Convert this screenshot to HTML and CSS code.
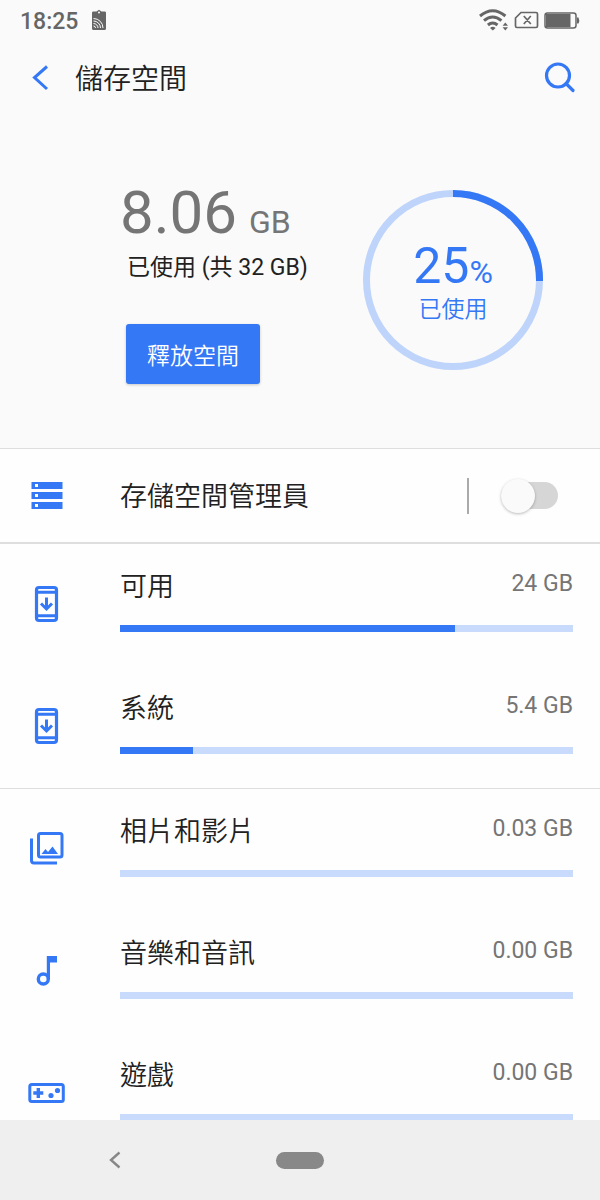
FILE: index.html
```html
<!DOCTYPE html>
<html lang="zh-Hant">
<head>
<meta charset="utf-8">
<meta name="viewport" content="width=device-width, initial-scale=1">
<title>儲存空間</title>
<link rel="stylesheet" href="styles.css">
</head>
<body>
<div class="app">
  <div class="status-bar">
    <span class="clock">18:25</span>
    <svg class="cast" width="16" height="22" viewBox="0 0 16 22" aria-hidden="true">
      <path d="M5.500 2.500 8 .8l2.500 1.700h3.200q1.300 0 1.300 1.300v15.700q0 1.500-1.500 1.500h-11Q1 21 1 19.500V3.800q0-1.300 1.300-1.300z" fill="#666"/>
      <circle cx="8" cy="3.500" r="1" fill="#fafafa"/>
      <g fill="none" stroke="#fafafa"><path d="M2.500 9.500a9.500 9.500 0 0 1 9.500 9.500M2.500 12a7 7 0 0 1 7 7M2.500 14.500A4.500 4.500 0 0 1 7 19M2.500 17a2 2 0 0 1 2 2"/></g>
    </svg>
    <svg class="wifi" width="30" height="24" viewBox="0 0 30 24" aria-hidden="true">
      <g fill="none" stroke="#666" stroke-width="3"><path d="M1 8q12.700-10.500 25.400 0"/><path d="M5 12.700q8.700-7.400 17.400 0"/><path d="M8.900 17q4.800-4 9.600 0"/></g>
      <path d="M11 20q2.800-2.500 5.600 0L13.800 22.500zM26.300 14.500l2.700 3.200h-5.400zM26.300 22.500l2.700-3.200h-5.400z" fill="#666"/>
    </svg>
    <svg class="sim" width="25" height="18" viewBox="0 0 25 18" aria-hidden="true">
      <path d="M7 1.500h15q1.500 0 1.500 1.500v12q0 1.500-1.500 1.500H3Q1.500 16.500 1.500 15V7zM9.800 5l7 8M16.800 5l-7 8" fill="none" stroke="#666" stroke-width="1.700"/>
    </svg>
    <svg class="battery" width="36" height="17" viewBox="0 0 36 17" aria-hidden="true">
      <rect x="1" y="1" width="31" height="15" rx="2.500" fill="none" stroke="#666" stroke-width="1.500"/>
      <path d="M2 2h24.500v13H2zM33 5.500h1.500q1.500 3 0 6H33z" fill="#666"/>
    </svg>
  </div>

  <header class="app-bar">
    <button class="icon-button" type="button" aria-label="返回">
      <svg width="18" height="26" viewBox="0 0 18 26"><path d="M16 1.500 3.500 12.500 16 24" fill="none" stroke="#3478f6" stroke-width="3"/></svg>
    </button>
    <h1 class="title">儲存空間</h1>
    <button class="icon-button" type="button" aria-label="搜尋">
      <svg width="32" height="32" viewBox="0 0 32 32"><g fill="none" stroke="#3478f6" stroke-width="3.200"><circle cx="14" cy="13.500" r="11.500"/><path d="m22 21.500 7 7" stroke-linecap="round"/></g></svg>
    </button>
  </header>

  <main class="content">
    <section class="summary">
      <div class="usage">
        <p class="amount">8.06 <span class="unit">GB</span></p>
        <p class="total">已使用 (共 32 GB)</p>
        <button class="free-button" type="button">釋放空間</button>
      </div>
      <div class="ring">
        <svg class="ring-chart" width="180" height="180" viewBox="0 0 180 180" aria-hidden="true">
          <circle cx="90" cy="90" r="86.500" fill="none" stroke="#bed4fb" stroke-width="7"/>
          <path d="M90 3.500A86.500 86.500 0 0 1 176.500 91" fill="none" stroke="#3478f6" stroke-width="7"/>
        </svg>
        <div class="ring-text">
          <p class="percent">25<span class="sign">%</span></p>
          <p class="ring-label">已使用</p>
        </div>
      </div>
    </section>

    <section class="manager">
      <svg class="row-icon" width="44" height="44" viewBox="0 0 44 44" aria-hidden="true">
        <path fill-rule="evenodd" fill="#3478f6" d="M6.500 8h31v7h-31zm3.500 2v3h3v-3zM6.500 18h31v7h-31zm3.500 2v3h3v-3zM6.500 28h31v7h-31zm3.500 2v3h3v-3z"/>
      </svg>
      <label class="name" for="manager">存儲空間管理員</label>
      <span class="separator"></span>
      <input class="switch" id="manager" type="checkbox" role="switch">
    </section>

    <section class="group">
      <div class="row">
        <svg class="row-icon" width="44" height="44" viewBox="0 0 44 44" aria-hidden="true">
          <rect x="11.500" y="5.500" width="20" height="33" rx="2.500" fill="none" stroke="#3478f6" stroke-width="3.200"/>
          <path d="M12 10.300h19M12 33.700h19" stroke="#3478f6" stroke-width="3"/>
          <path d="M21.500 15.500v11M16 21.500l5.500 5.500 5.500-5.500" fill="none" stroke="#3478f6" stroke-width="3"/>
        </svg>
        <label class="name" for="available">可用</label><span class="size">24 GB</span>
        <progress class="meter" id="available" max="100" value="74"></progress>
      </div>
      <div class="row">
        <svg class="row-icon" width="44" height="44" viewBox="0 0 44 44" aria-hidden="true">
          <rect x="11.500" y="5.500" width="20" height="33" rx="2.500" fill="none" stroke="#3478f6" stroke-width="3.200"/>
          <path d="M12 10.300h19M12 33.700h19" stroke="#3478f6" stroke-width="3"/>
          <path d="M21.500 15.500v11M16 21.500l5.500 5.500 5.500-5.500" fill="none" stroke="#3478f6" stroke-width="3"/>
        </svg>
        <label class="name" for="system">系統</label><span class="size">5.4 GB</span>
        <progress class="meter" id="system" max="100" value="16.200"></progress>
      </div>
    </section>

    <section class="group">
      <div class="row">
        <svg class="row-icon" width="44" height="44" viewBox="0 0 44 44" aria-hidden="true">
          <g fill="none" stroke="#3478f6" stroke-width="3"><rect x="13.500" y="6.500" width="23.500" height="23.500" rx="2"/><path d="M6.500 11.500v22q0 2.500 2.500 2.500h23"/></g>
          <path d="M16.500 27 20.500 22l2.500 3 4.500-5.500 5.500 7.500z" fill="#3478f6"/>
        </svg>
        <label class="name" for="photos">相片和影片</label><span class="size">0.03 GB</span>
        <progress class="meter" id="photos" max="100" value="0"></progress>
      </div>
      <div class="row">
        <svg class="row-icon" width="44" height="44" viewBox="0 0 44 44" aria-hidden="true">
          <circle cx="18.300" cy="30" r="5" fill="none" stroke="#3478f6" stroke-width="3.400"/>
          <path d="M21.800 7h10.200v6.500h-7V30h-3.200z" fill="#3478f6"/>
        </svg>
        <label class="name" for="music">音樂和音訊</label><span class="size">0.00 GB</span>
        <progress class="meter" id="music" max="100" value="0"></progress>
      </div>
      <div class="row">
        <svg class="row-icon" width="44" height="44" viewBox="0 0 44 44" aria-hidden="true">
          <rect x="4.800" y="13.500" width="33.500" height="17" rx="2" fill="none" stroke="#3478f6" stroke-width="3"/>
          <path d="M13.300 17v10M8.300 22h10" stroke="#3478f6" stroke-width="3.400"/>
          <circle cx="26" cy="24.500" r="2.600" fill="#3478f6"/><circle cx="32.500" cy="19.500" r="2.600" fill="#3478f6"/>
        </svg>
        <label class="name" for="games">遊戲</label><span class="size">0.00 GB</span>
        <progress class="meter" id="games" max="100" value="0"></progress>
      </div>
    </section>
  </main>

  <nav class="nav-bar">
    <button class="icon-button" type="button" aria-label="上一頁">
      <svg width="14" height="18" viewBox="0 0 14 18"><path d="m11.500 1.500-8.500 7.500 8.500 7.500" fill="none" stroke="#888" stroke-width="2.400"/></svg>
    </button>
    <button class="home" type="button" aria-label="主畫面"></button>
    <span></span>
  </nav>
</div>
</body>
</html>
```
FILE: styles.css
```css
* {
  box-sizing: border-box;
}

body {
  margin: 0;
  background: #fafafa;
  color: #212121;
  font-family: Roboto, "Noto Sans CJK TC", sans-serif;
}

h1,
p {
  margin: 0;
  font-weight: 400;
}

button {
  margin: 0;
  padding: 0;
  border: 0;
  background: none;
  font: inherit;
}

svg {
  display: block;
  flex: none;
}

.app {
  display: flex;
  flex-direction: column;
  height: 100vh;
}

.status-bar {
  display: flex;
  align-items: center;
  flex: none;
  height: 40px;
  padding: 0 20px;
  color: #666;
}

.clock {
  padding-top: 3px;
  font-size: 23px;
  font-weight: 500;
  line-height: 40px;
}

.cast {
  margin-left: 13px;
}

.wifi {
  margin-left: auto;
}

.sim {
  margin: 0 5px;
}

.app-bar {
  display: flex;
  align-items: center;
  flex: none;
  height: 76px;
  padding: 0 24px 0 31px;
}

.icon-button {
  display: flex;
  align-items: center;
  justify-content: center;
}

.title {
  flex: 1;
  margin-left: 26px;
  padding-top: 4px;
  font-size: 28px;
  font-weight: 350;
  line-height: 40px;
}

.content {
  flex: 1;
  min-height: 0;
  overflow-y: auto;
  scrollbar-width: none;
}

.summary {
  display: flex;
  justify-content: space-between;
  height: 333px;
  padding: 59px 57px 0 120px;
  border-bottom: 1px solid #dedede;
}

.amount {
  display: flex;
  align-items: baseline;
  gap: 12px;
  color: #757575;
  font-size: 60px;
  line-height: 76px;
}

.unit {
  font-size: 32px;
  line-height: 1;
}

.total {
  margin-left: 7px;
  font-size: 23px;
  line-height: 34px;
}

.free-button {
  height: 60px;
  margin: 39px 0 0 6px;
  padding: 0 21px;
  border-radius: 3px;
  background: #3478f6;
  box-shadow: 0 1px 3px #0003;
  color: #fff;
  font-size: 23px;
  font-weight: 350;
}

.ring {
  display: grid;
  height: 180px;
  margin-top: 15px;
  place-items: center;
}

.ring-chart,
.ring-text {
  grid-area: 1 / 1;
}

.ring-text {
  padding-top: 8px;
  color: #3478f6;
  text-align: center;
}

.percent {
  font-size: 50px;
  line-height: 52px;
}

.sign {
  font-size: 32px;
  line-height: 1;
}

.ring-label {
  font-size: 23px;
  font-weight: 350;
  line-height: 36px;
}

.manager {
  display: flex;
  align-items: center;
  height: 95px;
  padding: 0 42px 0 25px;
  border-bottom: 2px solid #dedede;
  background: #fefefe;
}

.manager .name {
  flex: 1;
  margin-left: 51px;
}

.name {
  padding-top: 3px;
  font-size: 27px;
  font-weight: 350;
  line-height: 36px;
}

.separator {
  width: 2px;
  height: 36px;
  margin-right: 32px;
  background: #aaa;
}

.switch {
  display: flex;
  align-items: center;
  appearance: none;
  width: 57px;
  height: 27px;
  margin: 0;
  border-radius: 14px;
  background: #d6d6d6;
}

.switch::before {
  width: 34px;
  height: 34px;
  flex: none;
  border-radius: 50%;
  background: #fafafa;
  box-shadow: 0 1px 3px #0004;
  content: "";
}

.switch:checked {
  justify-content: flex-end;
  background: #bed4fb;
}

.group {
  border-bottom: 1px solid #dedede;
  background: #fefefe;
}

.row {
  display: grid;
  grid-template-columns: 44px 1fr auto;
  grid-template-rows: 39px 1fr;
  height: 122px;
  padding: 22px 27px 34px 25px;
}

.row .row-icon {
  grid-row: 1 / 3;
  margin-top: 16px;
}

.row .name {
  margin-left: 51px;
}

.size {
  color: #757575;
  font-size: 23px;
  line-height: 36px;
}

.meter {
  grid-column: 2 / 4;
  align-self: end;
  appearance: none;
  width: calc(100% - 51px);
  height: 7px;
  margin-left: 51px;
  border: 0;
  background: #c9dbfd;
}

.meter::-webkit-progress-bar {
  background: #c9dbfd;
}

.meter::-webkit-progress-value {
  background: #3478f6;
}

.nav-bar {
  display: grid;
  grid-template-columns: 1fr 48px 1fr;
  align-items: center;
  flex: none;
  height: 80px;
  background: #efefef;
}

.nav-bar .icon-button {
  justify-self: start;
  margin-left: 108px;
}

.home {
  height: 17px;
  border-radius: 9px;
  background: #888;
}
```
